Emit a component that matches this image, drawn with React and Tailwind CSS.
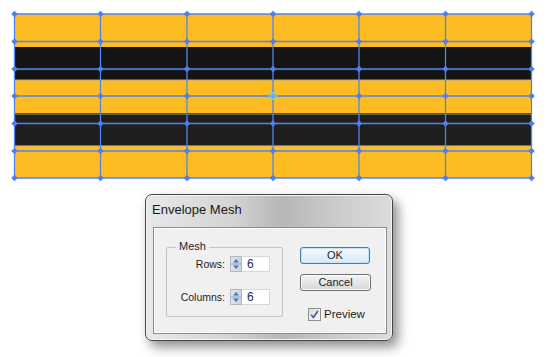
import React from 'react';

const xs = [14.5, 100.5, 187, 273, 359, 445.5, 531.5];
const ys = [14, 41.5, 69, 96, 123.5, 151, 178];

const MeshArt = () => (
  <svg width="550" height="194" className="block">
    {/* stripes */}
    <rect x="14.5" y="14" width="517" height="33" fill="#fcbc22" />
    <rect x="14.5" y="47" width="517" height="33" fill="#141414" />
    <rect x="14.5" y="69" width="517" height="2" fill="#1e1e1e" />
    <rect x="14.5" y="79" width="517" height="1.5" fill="#7a5a10" />
    <rect x="14.5" y="80.5" width="517" height="32.5" fill="#fcbc22" />
    <rect x="14.5" y="113" width="517" height="1.5" fill="#6b5416" />
    <rect x="14.5" y="114.5" width="517" height="31.5" fill="#1f1f1f" />
    <rect x="14.5" y="145" width="517" height="1.5" fill="#9a7414" />
    <rect x="14.5" y="146.5" width="517" height="31.5" fill="#fcbc22" />

    {/* mesh lines */}
    {xs.map((x) => (
      <line key={'v' + x} x1={x} y1="14" x2={x} y2="178" stroke="#5284ee" strokeWidth="1.3" />
    ))}
    {ys.map((y) => (
      <line key={'h' + y} x1="14.5" y1={y} x2="531.5" y2={y} stroke="#5284ee" strokeWidth="1.3" />
    ))}

    {/* mesh points */}
    {xs.map((x) =>
      ys.map((y) => {
        const active = x === 273 && y === 96;
        return (
          <g key={x + '-' + y}>
            <rect
              x={x - 2.3}
              y={y - 2.3}
              width="4.6"
              height="4.6"
              transform={`rotate(45 ${x} ${y})`}
              fill={active ? '#7fa0f0' : '#4f7fee'}
            />
            {active && <circle cx={x} cy={y} r="3.2" fill="none" stroke="#55e3ff" strokeWidth="1.2" />}
          </g>
        );
      })
    )}
  </svg>
);

const Spinner = () => (
  <svg width="12" height="16" className="block shrink-0">
    <defs>
      <linearGradient id="spg" x1="0" y1="0" x2="1" y2="0">
        <stop offset="0" stopColor="#dfe6ee" />
        <stop offset="1" stopColor="#c9d3de" />
      </linearGradient>
    </defs>
    <rect x="0.5" y="0.5" width="11" height="15" fill="url(#spg)" stroke="#b4b8bd" />
    <line x1="1" y1="8" x2="11" y2="8" stroke="#9aa6b3" />
    <path d="M3 6.5 L6 3 L9 6.5 Z" fill="#4876c4" />
    <path d="M3 9.5 L6 13 L9 9.5 Z" fill="#4876c4" />
  </svg>
);

const NumField = ({ label, value }) => (
  <div className="flex items-center h-[16px]">
    <span className="w-[58px] text-right text-[10.5px] text-[#1e1e1e] leading-none">{label}</span>
    <div className="ml-[5px] flex">
      <Spinner />
      <div className="w-[28px] h-[16px] bg-white border border-l-0 border-[#d6d8db] flex items-center pl-[5px] text-[12px] text-[#1e2a50] leading-none">
        {value}
      </div>
    </div>
  </div>
);

export default function App() {
  return (
    <div
      className="w-[550px] h-[357px] bg-white overflow-hidden"
      style={{ fontFamily: '"Liberation Sans", Arial, sans-serif' }}
    >
      <MeshArt />

      {/* Dialog */}
      <div className="ml-[145px] w-[248px] h-[147px] rounded-[7px] border border-[#474747] bg-[linear-gradient(90deg,#e8e8e8_0%,#d4d4d4_35%,#b7b7b7_55%,#cdcdcd_80%,#dcdcdc_100%)] shadow-[5px_6px_12px_rgba(0,0,0,0.45),inset_0_0_0_1px_#f4f4f4] flex flex-col">
        <div className="h-[32px] pl-[6px] pt-[8px] text-[13px] text-[#1a1a1a] leading-none">Envelope Mesh</div>

        <div className="ml-[7px] mr-[5px] mb-[6px] flex-1 border border-[#8c8c8c] bg-[#f0f0f0] shadow-[inset_0_0_0_1px_#ffffff] flex pt-[19px] pl-[12px]">
          {/* Mesh group */}
          <div className="relative w-[117px] h-[70px] border border-[#c4c4c4] rounded-[2px] pt-[8px] flex flex-col gap-[17px]">
            <span className="absolute -top-[7px] left-[9px] px-[3px] bg-[#f0f0f0] text-[11px] text-[#1e1e1e] leading-none">
              Mesh
            </span>
            <NumField label="Rows:" value="6" />
            <NumField label="Columns:" value="6" />
          </div>

          {/* Right column */}
          <div className="ml-[17px] flex flex-col">
            <button className="w-[70px] h-[17px] rounded-[3px] border border-[#3c7fb1] bg-[linear-gradient(#f4f9fd,#dbe9f5)] shadow-[inset_0_0_0_1px_#bfe3f8] text-[11px] text-[#1e1e1e] leading-none">
              OK
            </button>
            <button className="mt-[10px] w-[71px] h-[17px] rounded-[3px] border border-[#707070] bg-[linear-gradient(#f3f3f3_0%,#e6e6e6_50%,#d6d6d6_100%)] shadow-[inset_0_0_0_1px_#fbfbfb] text-[11px] text-[#1e1e1e] leading-none">
              Cancel
            </button>
            <div className="mt-[17px] ml-[8px] flex items-center">
              <div className="w-[13px] h-[13px] border border-[#8f8f8f] bg-[linear-gradient(135deg,#dcdcdc,#fafafa)] flex items-center justify-center">
                <svg width="9" height="9" viewBox="0 0 9 9">
                  <path d="M1.2 4.8 L3.4 7.4 L7.8 1" fill="none" stroke="#3a55ae" strokeWidth="1.6" />
                </svg>
              </div>
              <span className="ml-[3px] text-[11.5px] text-[#1e1e1e] leading-none">Preview</span>
            </div>
          </div>
        </div>
      </div>
    </div>
  );
}
